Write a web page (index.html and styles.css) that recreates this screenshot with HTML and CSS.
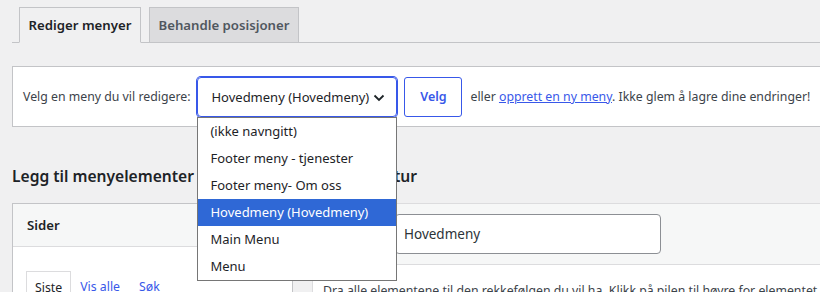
FILE: index.html
```html
<!DOCTYPE html>
<html lang="nb">
<head>
    <meta charset="UTF-8">
    <title>Menyer</title>
    <link rel="stylesheet" href="styles.css">
</head>
<body>
    <div class="wrap">
        <div class="nav-tabs">
            <a class="nav-tab active">Rediger menyer</a>
            <a class="nav-tab">Behandle posisjoner</a>
        </div>

        <div class="manage-menus">
            <span class="select-label">Velg en meny du vil redigere:</span>
            <div class="menu-select">
                <span>Hovedmeny (Hovedmeny)</span>
                <svg class="chevron" width="12" height="8" viewBox="0 0 12 8">
                    <path d="M1.5 1.5 L6 6 L10.5 1.5" fill="none" stroke="#1d2327" stroke-width="1.8"/>
                </svg>
                <ul class="select-list">
                    <li>(ikke navngitt)</li>
                    <li>Footer meny - tjenester</li>
                    <li>Footer meny- Om oss</li>
                    <li class="selected">Hovedmeny (Hovedmeny)</li>
                    <li>Main Menu</li>
                    <li>Menu</li>
                </ul>
            </div>
            <button class="button">Velg</button>
            <span class="manage-text">eller <a href="#">opprett en ny meny</a>. Ikke glem å lagre dine endringer!</span>
        </div>

        <div class="menus-frame">
            <div class="settings-column">
                <h2>Legg til menyelementer</h2>
                <div class="panel">
                    <div class="panel-title">Sider</div>
                    <div class="panel-body">
                        <ul class="panel-tabs">
                            <li class="current">Siste</li>
                            <li><a href="#">Vis alle</a></li>
                            <li><a href="#">Søk</a></li>
                        </ul>
                    </div>
                </div>
            </div>
            <div class="management-column">
                <h2>Menystruktur</h2>
                <div class="menu-edit">
                    <div class="menu-header">
                        <label class="menu-name-label">Menynavn</label>
                        <input class="menu-name" type="text" value="Hovedmeny">
                    </div>
                    <div class="menu-body">
                        Dra alle elementene til den rekkefølgen du vil ha. Klikk på pilen til høyre for elementet for å vise flere innstillinger.
                    </div>
                </div>
            </div>
        </div>
    </div>
</body>
</html>
```

FILE: styles.css
```css
body {
    margin: 0;
    background: #f0f0f1;
    color: #3c434a;
    font-family: "Noto Sans", "Open Sans", sans-serif;
    font-size: 12.3px;
    overflow: hidden;
}

.wrap {
    width: 900px;
    padding-left: 12px;
}

/* tabs */
.nav-tabs {
    display: flex;
    gap: 8px;
    padding: 7px 0 0 7px;
    border-bottom: 1px solid #c3c4c7;
}

.nav-tab {
    box-sizing: border-box;
    height: 36px;
    margin-bottom: -1px;
    border: 1px solid #c3c4c7;
    background: #dcdcde;
    color: #50575e;
    font-size: 13.2px;
    font-weight: 600;
    line-height: 34px;
    text-align: center;
    width: 150px;
}

.nav-tab.active {
    width: 122px;
    background: #f0f0f1;
    border-bottom-color: #f0f0f1;
    color: #1d2327;
}

/* menu picker */
.manage-menus {
    display: flex;
    align-items: center;
    box-sizing: border-box;
    height: 61px;
    margin-top: 23px;
    padding-left: 10px;
    background: #fff;
    border: 1px solid #c3c4c7;
}

.select-label {
    margin-right: 7px;
}

.menu-select {
    position: relative;
    box-sizing: border-box;
    display: flex;
    align-items: center;
    width: 200px;
    height: 40px;
    padding-left: 13px;
    border: 1px solid #3858e9;
    border-radius: 4px;
    box-shadow: 0 0 0 1px #3858e9;
    color: #1d2327;
    font-size: 13px;
}

.chevron {
    position: absolute;
    right: 11px;
    top: 16px;
}

.select-list {
    position: absolute;
    top: 39px;
    left: -1px;
    width: 200px;
    box-sizing: border-box;
    margin: 0;
    padding: 0;
    list-style: none;
    background: #fff;
    border: 1px solid #767676;
    z-index: 10;
}

.select-list li {
    height: 27px;
    line-height: 27px;
    padding-left: 12px;
    color: #1d2327;
}

.select-list li.selected {
    background: #2f68d6;
    color: #fff;
}

.button {
    box-sizing: border-box;
    width: 58px;
    height: 40px;
    margin-left: 7px;
    border: 1px solid #3858e9;
    border-radius: 3px;
    background: #fff;
    color: #3858e9;
    font-family: inherit;
    font-size: 12.5px;
    font-weight: 600;
}

.manage-text {
    margin-left: 8px;
}

.manage-text a {
    color: #3858e9;
}

/* columns */
.menus-frame {
    display: flex;
}

.settings-column {
    flex: none;
    width: 281px;
    margin-right: 19px;
}

.management-column {
    flex: 1;
}

h2 {
    margin: 37px 0 15px;
    color: #1d2327;
    font-size: 15.6px;
    font-weight: 600;
    line-height: 24px;
    white-space: nowrap;
}

.panel {
    background: #fff;
    border: 1px solid #c3c4c7;
    height: 200px;
}

.panel-title {
    height: 42px;
    line-height: 42px;
    padding-left: 14px;
    background: #f6f7f7;
    border-bottom: 1px solid #dcdcde;
    color: #1d2327;
    font-size: 13.2px;
    font-weight: 600;
}

.panel-body {
    padding: 24px 0 0 13px;
}

.panel-tabs {
    display: flex;
    margin: 0;
    padding: 0;
    list-style: none;
}

.panel-tabs li {
    padding-top: 2px;
    line-height: 28px;
    margin-right: 9px;
}

.panel-tabs li + li {
    margin-right: 19px;
}

.panel-tabs li.current {
    padding: 2px 8px 0;
    border: 1px solid #dcdcde;
    border-bottom: none;
    color: #1d2327;
}

.panel-tabs a {
    color: #3858e9;
    text-decoration: none;
}

.menu-edit {
    background: #fff;
    border: 1px solid #dcdcde;
    height: 200px;
}

.menu-header {
    display: flex;
    align-items: center;
    height: 60px;
    padding-left: 10px;
    background: #f6f7f7;
    border-bottom: 1px solid #dcdcde;
}

.menu-name-label {
    width: 72px;
}

.menu-name {
    box-sizing: border-box;
    width: 266px;
    height: 40px;
    padding: 0 8px;
    border: 1px solid #8c8f94;
    border-radius: 4px;
    color: #2c3338;
    font-family: inherit;
    font-size: 13.5px;
}

.menu-body {
    padding: 17px 10px;
    white-space: nowrap;
}
```
